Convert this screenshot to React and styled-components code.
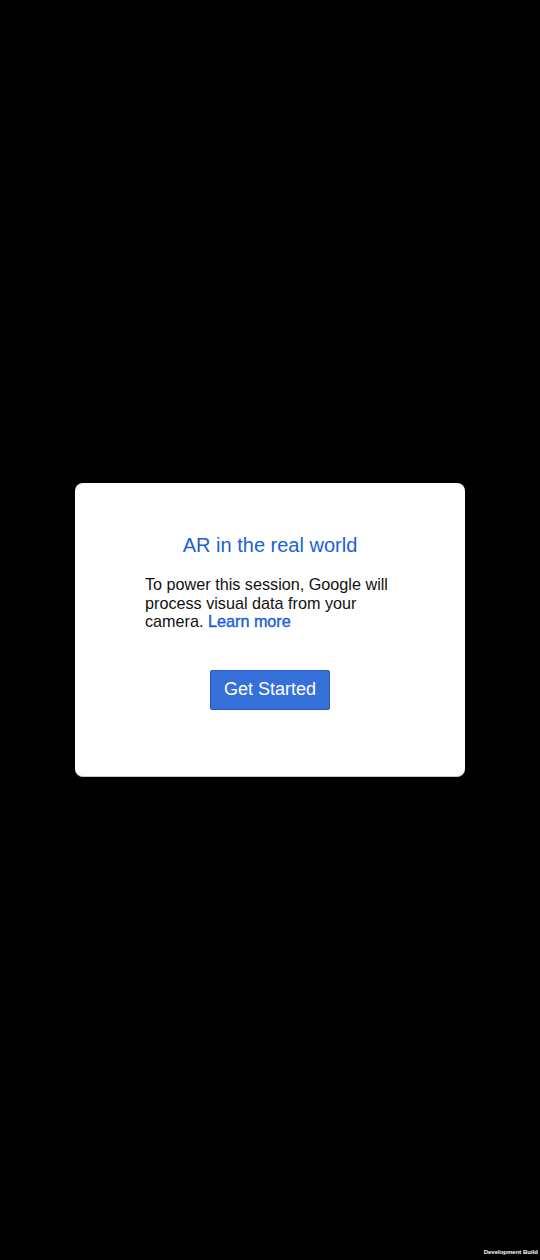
import React from "react";
import styled, { createGlobalStyle } from "styled-components";

const GlobalStyle = createGlobalStyle`
  html, body {
    margin: 0;
    padding: 0;
    background: #000;
  }
  body {
    font-family: "Liberation Sans", Arial, sans-serif;
  }
`;

const Screen = styled.div`
  position: relative;
  width: 540px;
  height: 1260px;
  background: #000;
  display: flex;
  align-items: center;
  justify-content: center;
`;

const Card = styled.div`
  width: 390px;
  height: 294px;
  box-sizing: border-box;
  background: #fff;
  border-radius: 8px;
  border-bottom: 1px solid #c8c8c8;
  padding: 50px 70px 0;
  display: flex;
  flex-direction: column;
  align-items: center;
`;

const Title = styled.h1`
  margin: 0;
  font-size: 20px;
  font-weight: 400;
  line-height: 24px;
  color: #1a5fdc;
  text-align: center;
`;

const Body = styled.p`
  margin: 18px -4px 0 0;
  align-self: stretch;
  font-size: 16.2px;
  line-height: 18.5px;
  color: #111;
`;

const Link = styled.a`
  color: #1a5fdc;
  text-decoration: none;
  -webkit-text-stroke: 0.4px #1a5fdc;
`;

const Button = styled.button`
  margin-top: 39px;
  width: 120px;
  height: 40px;
  background: #3570db;
  border: 1px solid #2a5cb8;
  border-radius: 2px;
  color: #fff;
  font-family: "Liberation Sans", Arial, sans-serif;
  font-size: 18px;
  padding: 0;
`;

const BuildTag = styled.div`
  position: absolute;
  right: 2px;
  bottom: 5px;
  color: #fff;
  font-family: "Liberation Sans", Arial, sans-serif;
  font-size: 6px;
  font-weight: 700;
`;

export default function App() {
  return (
    <>
      <GlobalStyle />
      <Screen>
        <Card>
          <Title>AR in the real world</Title>
          <Body>
            To power this session, Google will process visual data from your
            camera. <Link>Learn more</Link>
          </Body>
          <Button>Get Started</Button>
        </Card>
        <BuildTag>Development Build</BuildTag>
      </Screen>
    </>
  );
}
